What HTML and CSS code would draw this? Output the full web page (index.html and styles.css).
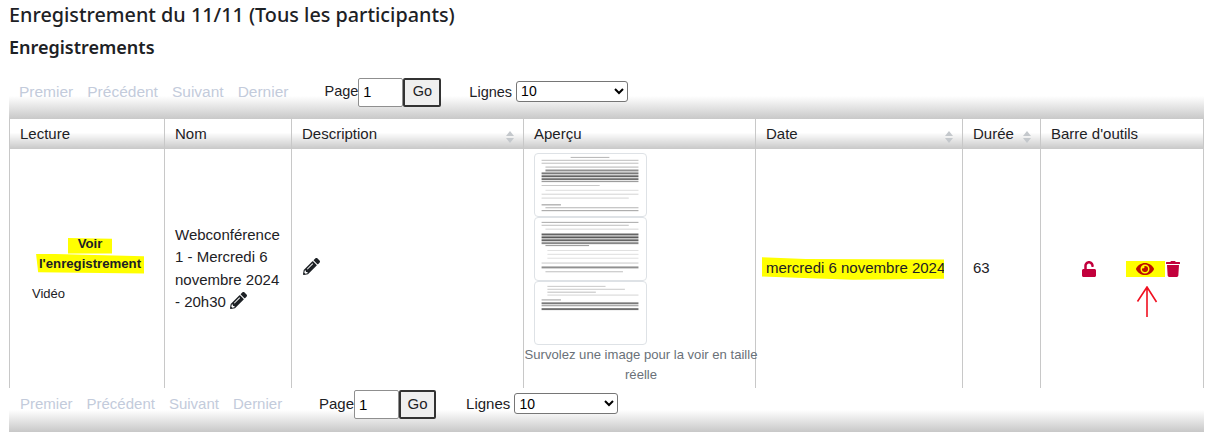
FILE: index.html
```html
<!DOCTYPE html>
<html lang="fr">
<head>
    <meta charset="UTF-8">
    <meta name="viewport" content="width=device-width, initial-scale=1.0">
    <title>Enregistrement du 11/11 (Tous les participants)</title>
    <link rel="stylesheet" href="styles.css">
</head>
<body>
    <h1>Enregistrement du 11/11 (Tous les participants)</h1>
    <h2>Enregistrements</h2>

    <div class="pager pager-top">
        <div class="pager-links">
            <span>Premier</span><span>Précédent</span><span>Suivant</span><span>Dernier</span>
        </div>
        <label class="pager-page">Page<input type="text" value="1"><button type="button">Go</button></label>
        <label class="pager-lines">Lignes <select><option>10</option></select></label>
    </div>

    <table class="records">
        <colgroup>
            <col class="col-play"><col class="col-name"><col class="col-desc"><col class="col-preview"><col class="col-date"><col class="col-time"><col class="col-tools">
        </colgroup>
        <thead>
            <tr>
                <th>Lecture</th>
                <th>Nom</th>
                <th class="sortable">Description <svg class="sort" viewBox="0 0 8 12"><path d="M4 0l4 5H0zM4 12L0 7h8z"/></svg></th>
                <th>Aperçu</th>
                <th class="sortable">Date <svg class="sort" viewBox="0 0 8 12"><path d="M4 0l4 5H0zM4 12L0 7h8z"/></svg></th>
                <th class="sortable">Durée <svg class="sort" viewBox="0 0 8 12"><path d="M4 0l4 5H0zM4 12L0 7h8z"/></svg></th>
                <th>Barre d'outils</th>
            </tr>
        </thead>
        <tbody>
            <tr>
                <td class="cell-play">
                    <div class="play-link"><span class="mark mark-voir">Voir</span><span class="mark mark-enr">l'enregistrement</span></div>
                    <div class="play-type">Vidéo</div>
                </td>
                <td>Webconférence 1 - Mercredi 6 novembre 2024 - 20h30 <svg class="icon-edit" viewBox="0 0 512 512"><path d="M497.9 142.1l-46.1 46.1c-4.7 4.7-12.3 4.7-17 0l-111-111c-4.7-4.7-4.7-12.3 0-17l46.1-46.1c18.7-18.7 49.1-18.7 67.9 0l60.1 60.1c18.8 18.7 18.8 49.1 0 67.9zM284.2 99.8L21.6 362.4.4 483.9c-2.9 16.4 11.4 30.6 27.8 27.8l121.5-21.3 262.6-262.6c4.7-4.7 4.7-12.3 0-17l-111-111c-4.8-4.7-12.4-4.7-17.1 0zM124.1 339.9c-5.5-5.5-5.5-14.3 0-19.8l154-154c5.5-5.5 14.3-5.5 19.8 0s5.5 14.3 0 19.8l-154 154c-5.5 5.5-14.3 5.5-19.8 0zM88 424h48v36.3l-64.5 11.3-31.1-31.1L51.7 376H88v48z"/></svg></td>
                <td class="cell-desc"><svg class="icon-edit" viewBox="0 0 512 512"><path d="M497.9 142.1l-46.1 46.1c-4.7 4.7-12.3 4.7-17 0l-111-111c-4.7-4.7-4.7-12.3 0-17l46.1-46.1c18.7-18.7 49.1-18.7 67.9 0l60.1 60.1c18.8 18.7 18.8 49.1 0 67.9zM284.2 99.8L21.6 362.4.4 483.9c-2.9 16.4 11.4 30.6 27.8 27.8l121.5-21.3 262.6-262.6c4.7-4.7 4.7-12.3 0-17l-111-111c-4.8-4.7-12.4-4.7-17.1 0zM124.1 339.9c-5.5-5.5-5.5-14.3 0-19.8l154-154c5.5-5.5 14.3-5.5 19.8 0s5.5 14.3 0 19.8l-154 154c-5.5 5.5-14.3 5.5-19.8 0zM88 424h48v36.3l-64.5 11.3-31.1-31.1L51.7 376H88v48z"/></svg></td>
                <td class="cell-preview">
                    <svg class="thumb" viewBox="0 0 113 64">
                        <g class="thumb-lines">
                            <rect x="36" y="3" width="40" height="1" opacity=".35"/>
                            <rect x="6" y="6" width="100" height="1" opacity=".3"/>
                            <rect x="6" y="9" width="100" height="1" opacity=".3"/>
                            <rect x="10" y="13" width="96" height="1" opacity=".35"/>
                            <rect x="10" y="16" width="96" height="2" opacity=".5"/>
                            <rect x="6" y="19" width="100" height="2" opacity=".6"/>
                            <rect x="6" y="22" width="100" height="2" opacity=".7"/>
                            <rect x="6" y="25" width="100" height="2" opacity=".65"/>
                            <rect x="6" y="28" width="100" height="1" opacity=".5"/>
                            <rect x="6" y="32" width="60" height="1" opacity=".25"/>
                            <rect x="10" y="37" width="96" height="1" opacity=".15"/>
                            <rect x="6" y="41" width="100" height="1" opacity=".2"/>
                            <rect x="6" y="45" width="90" height="1" opacity=".2"/>
                            <rect x="6" y="52" width="20" height="1" opacity=".5"/>
                            <rect x="10" y="55" width="96" height="1" opacity=".35"/>
                            <rect x="6" y="58" width="100" height="1" opacity=".45"/>
                        </g>
                    </svg>
                    <svg class="thumb" viewBox="0 0 113 64">
                        <g class="thumb-lines">
                            <rect x="6" y="4" width="100" height="1" opacity=".4"/>
                            <rect x="6" y="7" width="90" height="1" opacity=".3"/>
                            <rect x="10" y="11" width="96" height="1" opacity=".2"/>
                            <rect x="6" y="16" width="100" height="2" opacity=".7"/>
                            <rect x="6" y="19" width="100" height="2" opacity=".75"/>
                            <rect x="6" y="22" width="100" height="2" opacity=".7"/>
                            <rect x="6" y="25" width="100" height="2" opacity=".55"/>
                            <rect x="10" y="28" width="45" height="1" opacity=".5"/>
                            <rect x="12" y="33" width="94" height="1" opacity=".15"/>
                            <rect x="12" y="37" width="94" height="1" opacity=".15"/>
                            <rect x="12" y="41" width="94" height="1" opacity=".15"/>
                            <rect x="6" y="46" width="100" height="1" opacity=".25"/>
                            <rect x="6" y="50" width="100" height="2" opacity=".5"/>
                            <rect x="10" y="55" width="80" height="1" opacity=".3"/>
                        </g>
                    </svg>
                    <svg class="thumb" viewBox="0 0 113 64">
                        <g class="thumb-lines">
                            <rect x="12" y="4" width="60" height="1" opacity=".25"/>
                            <rect x="12" y="7" width="80" height="1" opacity=".25"/>
                            <rect x="12" y="10" width="50" height="1" opacity=".3"/>
                            <rect x="12" y="13" width="94" height="1" opacity=".2"/>
                            <rect x="6" y="18" width="20" height="1" opacity=".45"/>
                            <rect x="6" y="21" width="100" height="2" opacity=".6"/>
                            <rect x="6" y="24" width="100" height="1" opacity=".5"/>
                            <rect x="6" y="27" width="100" height="2" opacity=".65"/>
                        </g>
                    </svg>
                    <p class="preview-hint">Survolez une image pour la voir en taille réelle</p>
                </td>
                <td class="cell-date"><span class="mark mark-date">mercredi 6 novembre 2024</span></td>
                <td>63</td>
                <td>
                    <div class="tools">
                        <svg class="icon-tool" viewBox="0 0 448 512"><path d="M400 256H152V152.9c0-39.6 31.7-72.5 71.3-72.9 40-.4 72.7 32.1 72.7 72v16c0 13.3 10.7 24 24 24h32c13.3 0 24-10.7 24-24v-16C376 68 307.5-.3 223.5 0 139.5.3 72 69.5 72 153.5V256H48c-26.5 0-48 21.5-48 48v160c0 26.5 21.5 48 48 48h352c26.5 0 48-21.5 48-48V304c0-26.5-21.5-48-48-48z"/></svg>
                        <span class="tool-eye">
                            <svg class="icon-eye" viewBox="0 0 576 512"><path d="M572.52 241.4C518.29 135.59 410.93 64 288 64S57.68 135.64 3.48 241.41a32.35 32.35 0 0 0 0 29.19C57.71 376.41 165.07 448 288 448s230.32-71.64 284.52-177.41a32.35 32.35 0 0 0 0-29.19zM288 400a144 144 0 1 1 144-144 143.93 143.93 0 0 1-144 144zm0-240a95.31 95.31 0 0 0-25.31 3.79 47.85 47.85 0 0 1-66.9 66.9A95.78 95.78 0 1 0 288 160z"/></svg>
                            <svg class="arrow" viewBox="0 0 22 32"><path d="M11 31V2M1.500 15.500L11 1l9.500 15"/></svg>
                        </span>
                        <svg class="icon-tool" viewBox="0 0 448 512"><path d="M432 32H312l-9.400-18.700A24 24 0 0 0 281.100 0H166.800a23.720 23.720 0 0 0-21.400 13.300L136 32H16A16 16 0 0 0 0 48v32a16 16 0 0 0 16 16h416a16 16 0 0 0 16-16V48a16 16 0 0 0-16-16zM53.200 467a48 48 0 0 0 47.900 45h245.800a48 48 0 0 0 47.900-45L416 128H32z"/></svg>
                    </div>
                </td>
            </tr>
        </tbody>
    </table>

    <div class="pager pager-bottom">
        <div class="pager-links">
            <span>Premier</span><span>Précédent</span><span>Suivant</span><span>Dernier</span>
        </div>
        <label class="pager-page">Page<input type="text" value="1"><button type="button">Go</button></label>
        <label class="pager-lines">Lignes <select><option>10</option></select></label>
    </div>
</body>
</html>
```

FILE: styles.css
```css
body {
    margin: 0;
    padding: 0 14px 0 9px;
    font-family: "Liberation Sans", Arial, sans-serif;
    font-size: 15px;
    line-height: 1.5;
    color: #1d2125;
    background: #fff;
}
h1 {
    margin: 0;
    padding-top: 1px;
    font-family: "Noto Sans", sans-serif;
    font-size: 19.800px;
    font-weight: 500;
    line-height: 28px;
}
h2 {
    margin: 5px 0 0;
    font-family: "Noto Sans", sans-serif;
    font-size: 18px;
    font-weight: 600;
    line-height: 26px;
}

/* barres de pagination */
.pager {
    box-sizing: border-box;
    display: flex;
    align-items: center;
    background: linear-gradient(#fff 50%, #c8c8c8 100%);
}
.pager-top {
    height: 46px;
    margin-top: 13px;
    padding: 0 0 8px 10px;
    font-size: 14.500px;
}
.pager-bottom {
    height: 44px;
    padding: 0 0 12px 11px;
}
.pager-links {
    display: flex;
    gap: 14px;
    color: #c3cbdb;
}
.pager-top .pager-links {
    font-size: 15.500px;
}
.pager-page {
    display: flex;
    align-items: center;
    margin-left: 36px;
}
.pager-lines {
    margin-left: 28px;
}
.pager-bottom .pager-links {
    width: 263px;
}
.pager-bottom .pager-page {
    margin-left: 36px;
}
.pager-bottom .pager-lines {
    margin-left: 30px;
}
.pager input {
    box-sizing: border-box;
    width: 45px;
    height: 29px;
    padding: 1px 4px;
    border: 1px solid #8f8f8f;
    border-radius: 2px;
    font: inherit;
}
.pager button {
    box-sizing: border-box;
    width: 38px;
    height: 29px;
    padding: 0;
    border: 2px solid #333;
    border-radius: 2px;
    background: #efefef;
    color: #1d2125;
    font: inherit;
}
.pager select {
    box-sizing: border-box;
    width: 112px;
    height: 21px;
    padding: 0;
    border: 1px solid #767676;
    border-radius: 3px;
    background: #fff;
    font: inherit;
    font-size: 14px;
    line-height: 18px;
}
.pager-bottom button {
    width: 37px;
}
.pager-bottom select {
    width: 104px;
}

/* tableau */
.records {
    width: 1194px;
    border-collapse: collapse;
    table-layout: fixed;
}
.col-play { width: 155px; }
.col-name { width: 127px; }
.col-desc { width: 232px; }
.col-preview { width: 232px; }
.col-date { width: 207px; }
.col-time { width: 78px; }
.col-tools { width: 163px; }

.records th,
.records td {
    padding: 0 10px;
    border-left: 1px solid #c8c8c8;
    border-right: 1px solid #c8c8c8;
}
.records th {
    position: relative;
    height: 30px;
    font-weight: 400;
    text-align: left;
    background: linear-gradient(#fff 45%, #c8c8c8 100%);
}
.records td {
    height: 235px;
    vertical-align: middle;
}
.sort {
    position: absolute;
    right: 9px;
    top: 12px;
    width: 8px;
    height: 12px;
    fill: #c4c8cc;
}
.cell-play {
    font-size: 13.200px;
}
.play-link {
    width: 108px;
    margin: 0 0 0 16px;
    font-weight: 700;
    line-height: 20px;
    text-align: center;
}
.play-type {
    margin: 10px 0 0 12px;
    font-size: 13px;
    line-height: 20px;
}
.mark {
    background: #ff0;
}
.mark-voir {
    display: block;
    width: 44px;
    margin: 0 auto;
    clip-path: polygon(0 22%, 100% 26%, 100% 100%, 0 100%);
}
.mark-enr {
    display: block;
    clip-path: polygon(0 0, 100% 14%, 100% 100%, 2% 94%);
}
.mark-date {
    display: block;
    box-sizing: border-box;
    width: 182px;
    margin-left: -4px;
    padding-left: 4px;
    white-space: nowrap;
    clip-path: polygon(0 0, 24% 8%, 100% 10%, 100% 96%, 50% 100%, 0 86%);
}
.icon-edit {
    width: 17px;
    height: 17px;
    vertical-align: -2px;
    fill: #1d2125;
}
.cell-desc .icon-edit {
    margin-left: 1px;
}
.cell-preview.cell-preview {
    padding: 4px 0 0;
    vertical-align: top;
    text-align: left;
}
.thumb {
    display: block;
    box-sizing: border-box;
    width: 113px;
    height: 64px;
    margin-left: 10px;
    border: 1px solid #dee2e6;
    border-radius: 4px;
    background: #fff;
}
.thumb-lines {
    fill: #222;
    filter: blur(.8px);
}
.preview-hint {
    width: 234px;
    margin: 0;
    font-size: 13.100px;
    line-height: 20px;
    text-align: center;
    white-space: normal;
    color: #6a7178;
}
.tools {
    display: flex;
    align-items: center;
    padding-left: 31px;
}
.icon-tool {
    width: 14px;
    height: 16px;
    fill: #c2003c;
}
.tool-eye {
    position: relative;
    display: flex;
    justify-content: center;
    align-items: center;
    width: 39px;
    height: 16px;
    margin-left: 30px;
    margin-right: 1px;
    background: #ff0;
}
.icon-eye {
    width: 18px;
    height: 16px;
    margin-left: -2px;
    fill: #bd0f00;
}
.arrow {
    position: absolute;
    left: 10px;
    top: 25px;
    width: 22px;
    height: 32px;
    fill: none;
    stroke: #f01020;
    stroke-width: 1.600;
}
```
